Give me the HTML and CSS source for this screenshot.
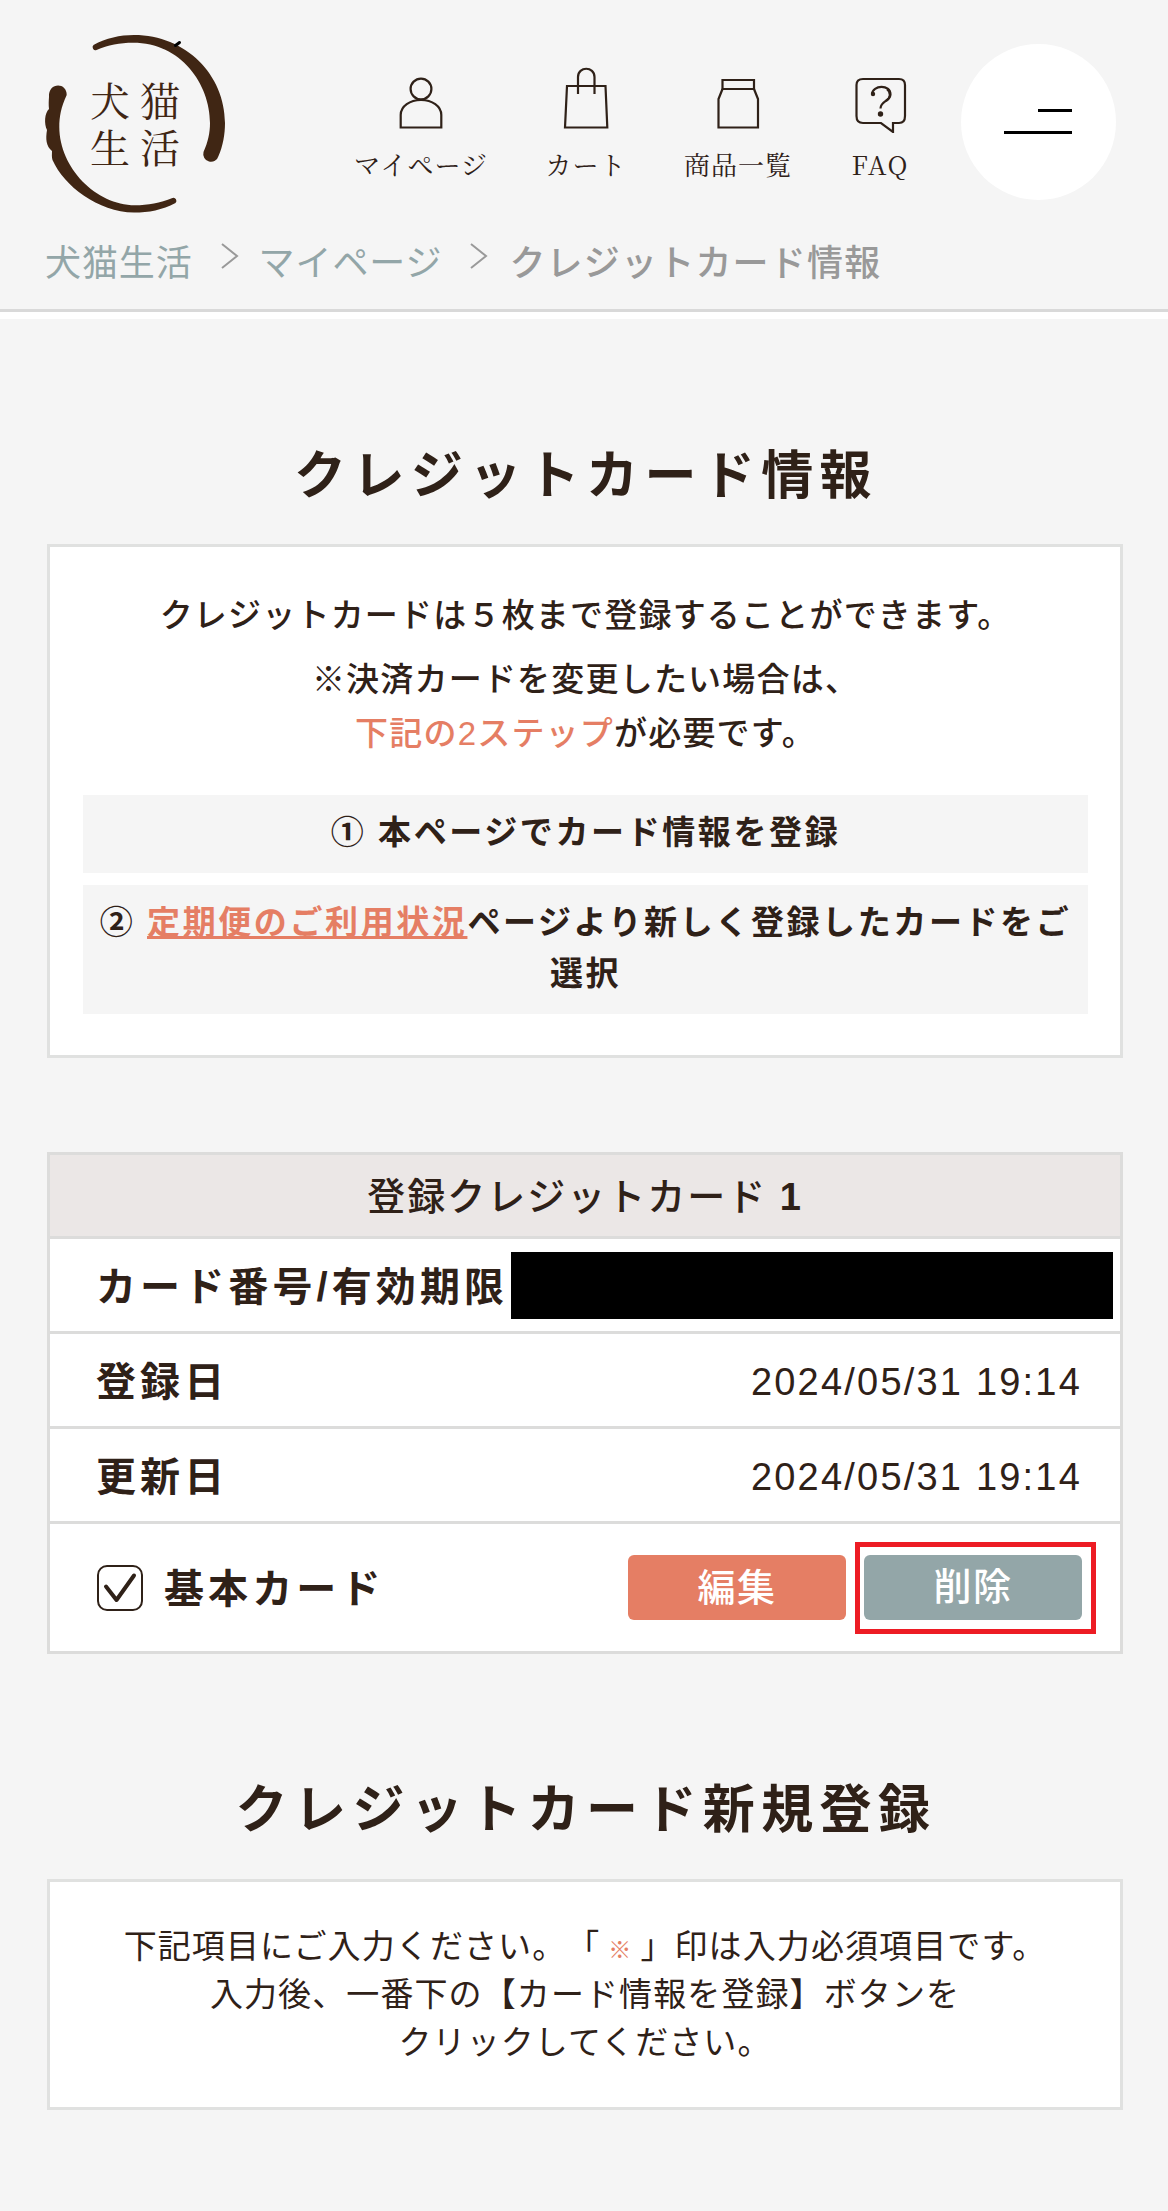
FILE: index.html
```html
<!DOCTYPE html>
<html lang="ja">

<head>
    <meta charset="UTF-8">
    <meta name="viewport" content="width=device-width, initial-scale=1.0">
    <title>クレジットカード情報 | 犬猫生活</title>
    <link rel="stylesheet" href="styles.css">
</head>

<body>
    <header class="header">
        <div class="header-top">
            <a class="logo" href="#">
                <svg width="210" height="210" viewBox="0 0 210 210">
                    <path class="logo-ring" d="M63.5 25C76 18 90 15 104 15C156 15 195 55 195 103C195 114 193 126 188.5 136A7.7 7.7 0 0 1 173.5 132C178 122 180 113 180 103C180 64 151 22.7 103 22.7C90 22.7 78 25 66.5 30A3 3 0 0 1 63.5 25Z" />
                    <path class="logo-ring" d="M19 77C18 62 37 62 36.7 75C31 87 29.3 97 29.3 107C29.5 148 66 185 105 185.3C118 185.3 130 183 142.5 178A3 3 0 0 1 145.5 183C132 190 119 192.6 104 192.6C68 192 34 166 22.5 140C21.5 137 22 134 22 131C16 126 15.5 119 17 110C14 104 14.5 93 19 89C18.5 85 18.7 81 19 77Z" />
                    <path class="logo-tick" d="M145.5 25.5L149.5 22.5" />
                    <text class="logo-text"><tspan x="60" y="96">犬猫</tspan><tspan x="60" y="143">生活</tspan></text>
                </svg>
            </a>

            <nav class="nav">
                <a class="nav-item nav-mypage" href="#">
                    <svg width="50" height="66" viewBox="0 0 50 66">
                        <circle cx="25" cy="22" r="10.4" />
                        <path d="M4.7 60.5V48C4.7 39 14 33 25 33S45.3 39 45.3 48V60.5Z" />
                    </svg>
                    <span>マイページ</span>
                </a>
                <a class="nav-item nav-cart" href="#">
                    <svg width="50" height="66" viewBox="0 0 50 66">
                        <path d="M6 19H44.5L46.3 60.5H4Z" />
                        <path d="M17 27V10C17 -1 33.5 -1 33.5 10V27" />
                    </svg>
                    <span>カート</span>
                </a>
                <a class="nav-item nav-products" href="#">
                    <svg width="50" height="66" viewBox="0 0 50 66">
                        <path d="M9.5 13H41V22H9.5Z" />
                        <path d="M9.5 22L5.5 32V60.5H45V32L41 22" />
                    </svg>
                    <span>商品一覧</span>
                </a>
                <a class="nav-item nav-faq" href="#">
                    <svg width="54" height="66" viewBox="0 0 54 66">
                        <path d="M9 12H45Q51 12 51 18V49Q51 56 45 56H39V65L27 56H9Q2.500 56 2.500 49V18Q2.500 12 9 12Z" />
                        <path d="M18 27C18.500 18 36.500 17 36.500 27.500C36.500 34 26.500 34 26.500 41.500" />
                        <path d="M33 22C37 25 37 31 32 34" />
                        <circle class="nav-dot" cx="19" cy="27" r="2.200" />
                        <circle class="nav-dot" cx="26.500" cy="47" r="2.700" />
                    </svg>
                    <span>FAQ</span>
                </a>
            </nav>

            <button class="menu-btn" aria-label="メニュー">
                <span class="menu-line short"></span>
                <span class="menu-line"></span>
            </button>
        </div>

        <div class="breadcrumb">
            <a href="#">犬猫生活</a>
            <svg width="18" height="26" viewBox="0 0 18 26"><path d="M1 1L16 13L1 25" /></svg>
            <a href="#">マイページ</a>
            <svg width="18" height="26" viewBox="0 0 18 26"><path d="M1 1L16 13L1 25" /></svg>
            <span class="current">クレジットカード情報</span>
        </div>
    </header>

    <main class="container">
        <h1 class="title">クレジットカード情報</h1>

        <section class="box info">
            <p class="lead">クレジットカードは５枚まで登録することができます。</p>
            <p class="note">※決済カードを変更したい場合は、<br><span class="accent">下記の2ステップ</span>が必要です。</p>
            <div class="step">① 本ページでカード情報を登録</div>
            <div class="step">② <a href="#">定期便のご利用状況</a>ページより新しく登録したカードをご選択</div>
        </section>

        <!-- Registered card -->
        <section class="box card">
            <h2 class="card-head">登録クレジットカード <b>1</b></h2>
            <div class="card-row masked">
                <span class="label">カード番号/有効期限</span>
                <span class="mask"></span>
            </div>
            <div class="card-row">
                <span class="label">登録日</span>
                <span class="value">2024/05/31 19:14</span>
            </div>
            <div class="card-row">
                <span class="label">更新日</span>
                <span class="value">2024/05/31 19:14</span>
            </div>
            <div class="card-row actions">
                <svg class="check" width="46" height="46" viewBox="0 0 46 46">
                    <rect x="1" y="1" width="44" height="44" rx="9" />
                    <path d="M9 21.5L19.5 35L37 10.5" />
                </svg>
                <span class="label">基本カード</span>
                <button class="btn edit">編集</button>
                <div class="highlight">
                    <button class="btn delete">削除</button>
                </div>
            </div>
        </section>

        <h1 class="title title-new">クレジットカード新規登録</h1>

        <section class="box guide">
            <p>下記項目にご入力ください。「<span class="required">※</span>」印は入力必須項目です。<br>入力後、一番下の【カード情報を登録】ボタンを<br>クリックしてください。</p>
        </section>
    </main>
</body>

</html>
```

FILE: styles.css
```css
* {
    box-sizing: border-box;
}

body {
    margin: 0;
    background-color: #f5f5f5;
    color: #2f2118;
    font-family: "Liberation Sans", "Noto Sans CJK JP", sans-serif;
    text-spacing-trim: space-all;
}

a {
    color: inherit;
    text-decoration: none;
}

p,
h1,
h2 {
    margin: 0;
}

button {
    border: none;
    padding: 0;
    font-family: inherit;
}

/* header */
.header {
    height: 319px;
    border-bottom: 7px solid #fff;
    box-shadow: inset 0 -3px 0 #d9d9d9;
}

.header-top {
    display: flex;
    height: 230px;
    padding: 20px 52px 0 30px;
}

.logo {
    width: 210px;
    height: 210px;
}

.logo-ring {
    fill: #402614;
}

.logo-tick {
    stroke: #000;
    stroke-width: 3;
    stroke-linecap: round;
}

.logo-text {
    fill: #402614;
    font-family: "Noto Serif CJK JP", "Noto Sans CJK JP", serif;
    font-size: 40px;
    letter-spacing: 10px;
}

.nav {
    display: flex;
    flex: 1;
    padding: 47px 0 0 106px;
}

.nav-item {
    display: flex;
    flex-direction: column;
    align-items: center;
    font-family: "Noto Serif CJK JP", "Noto Sans CJK JP", serif;
    font-size: 26px;
    line-height: 36px;
    letter-spacing: 1px;
    white-space: nowrap;
}

.nav-item svg {
    fill: none;
    stroke: #2f2118;
    stroke-width: 2.2;
    margin-bottom: 13px;
}

.nav-item .nav-dot {
    fill: #2f2118;
    stroke: none;
}

.nav-mypage {
    width: 150px;
}

.nav-cart {
    width: 180px;
}

.nav-products {
    width: 124px;
}

.nav-faq {
    width: 161px;
}

.nav-faq span {
    letter-spacing: 2px;
}

.menu-btn {
    display: flex;
    flex-direction: column;
    align-items: flex-end;
    width: 156px;
    height: 156px;
    margin-top: 24px;
    padding: 65px 44px 0 0;
    border-radius: 50%;
    background-color: #fff;
}

.menu-line {
    width: 68px;
    height: 3px;
    background-color: #000;
}

.menu-line.short {
    width: 34px;
    margin-bottom: 19px;
}

.breadcrumb {
    display: flex;
    align-items: center;
    height: 60px;
    padding-left: 45px;
    font-size: 36px;
    letter-spacing: 0.9px;
    color: #93a6a8;
    white-space: nowrap;
}

.breadcrumb svg {
    margin: 0 20px 8px 28px;
    fill: none;
    stroke: #999;
    stroke-width: 2;
}

.breadcrumb .current {
    margin-left: 1px;
    color: #999;
    font-weight: 500;
    letter-spacing: 1.2px;
}

/* contents */
.container {
    padding: 0 45px 0 47px;
}

.title {
    padding: 118px 0 29px 2px;
    font-size: 52px;
    line-height: 78px;
    letter-spacing: 6.4px;
    text-align: center;
}

.box {
    border: 3px solid #e0e1e0;
    background-color: #fff;
    text-align: center;
}

.info {
    height: 514px;
    padding: 42px 32px 0 33px;
    font-size: 33px;
    font-weight: 500;
    letter-spacing: 1.2px;
}

.lead {
    line-height: 54px;
}

.note {
    margin: 10px 0 34px;
    line-height: 54px;
}

.accent {
    color: #e57e64;
}

.step {
    margin-bottom: 12px;
    padding: 12px 9px 14px;
    background-color: #f5f5f5;
    font-weight: bold;
    line-height: 51.5px;
    letter-spacing: 2.6px;
}

.step a {
    color: #e57e64;
    text-decoration: underline;
}

/* registered card */
.card {
    margin-top: 94px;
    border-color: #dcdcdb;
}

.card-head {
    height: 81px;
    background-color: #ebe7e6;
    font-size: 38px;
    font-weight: 500;
    line-height: 84px;
    letter-spacing: 2px;
}

.card-row {
    display: flex;
    align-items: center;
    justify-content: space-between;
    height: 95px;
    padding: 0 38px 0 46px;
    border-top: 3px solid #dcdcdb;
    white-space: nowrap;
}

.label {
    padding-bottom: 3px;
    font-size: 40px;
    font-weight: bold;
    letter-spacing: 4.1px;
}

.value {
    padding-top: 5px;
    font-size: 38px;
    letter-spacing: 2.2px;
}

.masked {
    padding-right: 7px;
}

.mask {
    width: 602px;
    height: 67px;
    background-color: #000;
}

.actions {
    height: 130px;
    padding: 0 24px 0 47px;
}

.actions .label {
    flex: 1;
    margin-left: 21px;
    text-align: left;
}

.check {
    fill: none;
    stroke: #2f2118;
    stroke-width: 2;
}

.check path {
    stroke-width: 4;
    stroke-linecap: round;
    stroke-linejoin: round;
}

.btn {
    display: block;
    width: 218px;
    height: 65px;
    padding-bottom: 7px;
    border-radius: 6px;
    color: #fff;
    font-size: 38px;
    font-weight: 500;
    letter-spacing: 1.5px;
}

.edit {
    margin-right: 9px;
    background-color: #e57e64;
}

.delete {
    background-color: #93a6a8;
}

.highlight {
    width: 241px;
    height: 92px;
    padding: 8px 0 0 4px;
    border: 5px solid #ed1c24;
}

/* new card */
.title-new {
    padding-top: 117px;
    padding-bottom: 30px;
}

.guide {
    height: 231px;
    padding-top: 41px;
    font-size: 33px;
    line-height: 48px;
    letter-spacing: 1.1px;
}

.required {
    display: inline-block;
    width: 40px;
    color: #e57e64;
    font-size: 23px;
    font-weight: 900;
    line-height: 1;
}
```
